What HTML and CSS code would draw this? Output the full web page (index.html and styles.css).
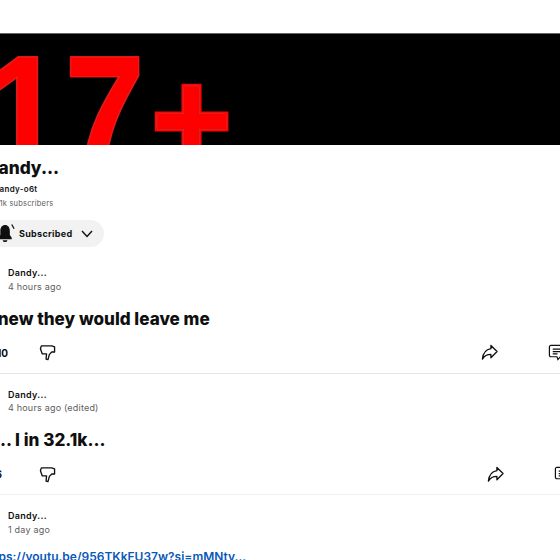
FILE: index.html
```html
<!DOCTYPE html>
<html lang="en">
<head>
<meta charset="utf-8">
<title>Dandy...</title>
<link rel="stylesheet" href="styles.css">
</head>
<body>
<div class="page">
  <div class="banner"><div class="banner-text"><span class="banner-digits"><span class="banner-one">1</span>7</span><span class="banner-plus">+</span></div></div>
  <section class="channel">
    <h1 class="channel-name">Dandy...</h1>
    <div class="handle">@dandy-o6t</div>
    <div class="subs">1.41k subscribers</div>
    <button class="sub-btn">
      <svg class="bell" viewBox="0 0 20 20"><path d="M8.500 1c-3 0-5 2.500-5 6v4.500L1.500 14.500v1.500h14v-1.500l-2-3V7c0-3.500-2-6-5-6z" fill="#0f0f0f"/><path d="M6 17h5a2.500 2 0 0 1-5 0z" fill="#0f0f0f"/><path d="M15.500 0.500l2.500 4.500" stroke="#0f0f0f" stroke-width="1.300" fill="none"/></svg>
      <span class="sub-label">Subscribed</span>
      <svg class="chev" viewBox="0 0 12 8"><path d="M1 1l5 5.500L11 1" fill="none" stroke="#0f0f0f" stroke-width="1.400"/></svg>
    </button>
  </section>

  <article class="post post-one">
    <div class="author">Dandy...</div>
    <div class="time">4 hours ago</div>
    <p class="post-title">I knew they would leave me</p>
    <div class="actions">
      <span class="count">10</span>
      <svg class="icon dislike" viewBox="0 0 18 18"><path d="M2.500 2h11l3 1v5.500h-3L11 11l-1.500 5.500-2-.5.500-5.500H3.500L1.500 5z" fill="none" stroke="#0f0f0f" stroke-width="1.400" stroke-linejoin="round"/></svg>
      <svg class="icon share" viewBox="0 0 18 18"><path d="M10.500 1.500L17 8l-6.500 6.500V11C6 11 3.500 12.500 1.500 16 2 11 4.500 6 10.500 5z" fill="none" stroke="#0f0f0f" stroke-width="1.400" stroke-linejoin="round"/></svg>
      <svg class="icon comment" viewBox="0 0 18 18"><path d="M3 1.500h13a1.500 1.500 0 0 1 1.500 1.500v9a1.500 1.500 0 0 1-1.500 1.500h-3l-2.500 3-1-3H3A1.500 1.500 0 0 1 1.500 12V3A1.500 1.500 0 0 1 3 1.500z M5 5.500h9 M5 8h9 M5 10.500h5" fill="none" stroke="#0f0f0f" stroke-width="1.300"/></svg>
    </div>
  </article>

  <article class="post post-two">
    <div class="author">Dandy...</div>
    <div class="time">4 hours ago (edited)</div>
    <p class="post-title">.... I in 32.1k...</p>
    <div class="actions">
      <span class="count">16</span>
      <svg class="icon dislike" viewBox="0 0 18 18"><path d="M2.500 2h11l3 1v5.500h-3L11 11l-1.500 5.500-2-.5.500-5.500H3.500L1.500 5z" fill="none" stroke="#0f0f0f" stroke-width="1.400" stroke-linejoin="round"/></svg>
      <svg class="icon share" viewBox="0 0 18 18"><path d="M10.500 1.500L17 8l-6.500 6.500V11C6 11 3.500 12.500 1.500 16 2 11 4.500 6 10.500 5z" fill="none" stroke="#0f0f0f" stroke-width="1.400" stroke-linejoin="round"/></svg>
      <svg class="icon comment" viewBox="0 0 18 18"><path d="M3 1.500h13a1.500 1.500 0 0 1 1.500 1.500v9a1.500 1.500 0 0 1-1.500 1.500h-3l-2.500 3-1-3H3A1.500 1.500 0 0 1 1.500 12V3A1.500 1.500 0 0 1 3 1.500z M5 5.500h9 M5 8h9 M5 10.500h5" fill="none" stroke="#0f0f0f" stroke-width="1.300"/></svg>
    </div>
  </article>

  <article class="post post-three">
    <div class="author">Dandy...</div>
    <div class="time">1 day ago</div>
    <a class="post-link" href="#">https://youtu.be/956TKkFU37w?si=mMNtv...</a>
  </article>
</div>
</body>
</html>
```
FILE: styles.css
```css
html, body {
  margin: 0;
  padding: 0;
  height: 560px;
  overflow: hidden;
  background: #fff;
}
body {
  font-family: Inter, "Liberation Sans", sans-serif;
  color: #0f0f0f;
}
.page {
  padding-top: 33px;
  width: 560px;
}
.banner {
  height: 112px;
  box-sizing: border-box;
  background: #000;
  border-top: 1px solid #666;
  overflow: hidden;
}
.banner-text {
  display: flex;
  align-items: baseline;
  margin-left: -16px;
  font-family: "Liberation Sans", sans-serif;
  font-weight: 700;
  font-size: 164px;
  line-height: 160px;
  color: #f00;
  -webkit-text-stroke: 3px #f00;
  paint-order: stroke fill;
  text-shadow: 0 0 2px #777;
}
.banner-digits {
  display: inline-block;
  flex: none;
  margin-right: -23px;
  transform: scaleX(.87);
  transform-origin: 0 0;
}
.banner-one { letter-spacing: 2px; }
.banner-plus {
  flex: none;
  margin-left: 6px;
  font-size: 137px;
  -webkit-text-stroke-width: 5px;
  transform: translateY(-3px);
}
.channel {
  margin-left: -14px;
  padding-top: 12px;
}
.channel-name {
  margin: 0;
  font-size: 17.300px;
  line-height: 22px;
  font-weight: 800;
}
.handle {
  margin-top: 5px;
  font-size: 8px;
  line-height: 10px;
  font-weight: 600;
  letter-spacing: 0.3px;
}
.subs {
  margin: 5px 0 0 3px;
  font-size: 7.500px;
  line-height: 10px;
  color: #606060;
  letter-spacing: 0.2px;
}
.sub-btn {
  display: flex;
  align-items: center;
  margin: 11px 0 0 0;
  height: 27px;
  width: 118px;
  padding: 0 0 0 11px;
  border: 0;
  border-radius: 14px;
  background: #f2f2f2;
  font-family: inherit;
  color: #0f0f0f;
}
.bell { width: 19px; height: 19px; flex: none; }
.sub-label {
  margin-left: 3px;
  font-size: 9px;
  font-weight: 700;
  letter-spacing: 0.3px;
}
.chev { width: 12px; height: 8px; margin-left: 9px; flex: none; }
.post { padding: 15px 0 11px 8px; }
.post-one { padding-top: 20px; border-bottom: 1px solid #e5e5e5; }
.post-two { border-bottom: 1px solid #efefef; }
.author {
  font-size: 9px;
  line-height: 12px;
  font-weight: 600;
  letter-spacing: 0.3px;
}
.time {
  margin-top: 1.500px;
  font-size: 9px;
  line-height: 12px;
  color: #606060;
  letter-spacing: 0.2px;
}
.post-title {
  margin: 15px 0 0 -29px;
  font-size: 17.100px;
  line-height: 22px;
  font-weight: 800;
}
.post-two .post-title { margin-left: -20px; }
.actions {
  display: flex;
  align-items: center;
  height: 18px;
  margin-top: 14px;
  margin-left: -12px;
}
.count {
  width: 12px;
  flex: none;
  font-size: 10px;
  font-weight: 700;
  text-align: right;
}
.post-two .count { margin-left: -6px; margin-right: 6px; }
.icon { width: 17px; height: 17px; flex: none; }
.dislike { margin-left: 31px; }
.share { margin-left: auto; }
.comment { margin-left: 50px; margin-right: -5px; }
.post-two .comment { margin-right: -11px; }
.post-link {
  display: block;
  margin: 13px 0 0 -25px;
  font-size: 12px;
  font-weight: 600;
  color: #0a58b8;
  text-decoration: none;
  white-space: nowrap;
}
```
